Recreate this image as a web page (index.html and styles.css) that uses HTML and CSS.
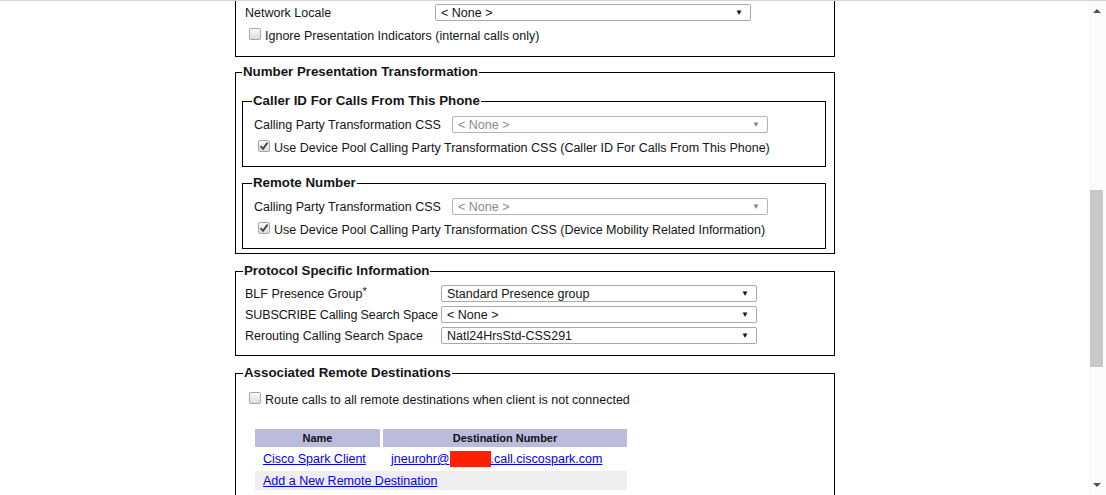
FILE: index.html
```html
<!DOCTYPE html>
<html lang="en">
<head>
  <meta charset="UTF-8" />
  <title>Phone Configuration</title>
  <link rel="stylesheet" href="styles.css">
</head>
<body>
  <div class="page">

    <!-- Device information (scrolled, top cut off) -->
    <fieldset class="box first">
      <div class="row locale-row">
        <span class="label">Network Locale</span>
        <div class="select"><span>&lt; None &gt;</span><span class="arrow">&#9660;</span></div>
      </div>
      <div class="check-row">
        <span class="cb"></span>
        <span>Ignore Presentation Indicators (internal calls only)</span>
      </div>
    </fieldset>

    <fieldset class="box group">
      <legend>Number Presentation Transformation</legend>

      <fieldset class="box inner">
        <legend>Caller ID For Calls From This Phone</legend>
        <div class="row inner-row">
          <span class="label">Calling Party Transformation CSS</span>
          <div class="select disabled"><span>&lt; None &gt;</span><span class="arrow">&#9660;</span></div>
        </div>
        <div class="check-row">
          <span class="cb checked">
            <svg width="10" height="10" viewBox="0 0 10 10"><path d="M1.5 5.2 L4 7.8 L8.6 1.6" fill="none" stroke="#444" stroke-width="1.8"/></svg>
          </span>
          <span>Use Device Pool Calling Party Transformation CSS (Caller ID For Calls From This Phone)</span>
        </div>
      </fieldset>

      <fieldset class="box inner">
        <legend>Remote Number</legend>
        <div class="row inner-row">
          <span class="label">Calling Party Transformation CSS</span>
          <div class="select disabled"><span>&lt; None &gt;</span><span class="arrow">&#9660;</span></div>
        </div>
        <div class="check-row">
          <span class="cb checked">
            <svg width="10" height="10" viewBox="0 0 10 10"><path d="M1.5 5.2 L4 7.8 L8.6 1.6" fill="none" stroke="#444" stroke-width="1.8"/></svg>
          </span>
          <span>Use Device Pool Calling Party Transformation CSS (Device Mobility Related Information)</span>
        </div>
      </fieldset>
    </fieldset>

    <fieldset class="box proto">
      <legend>Protocol Specific Information</legend>
      <div class="row proto-row">
        <span class="label">BLF Presence Group<sup>*</sup></span>
        <div class="select"><span>Standard Presence group</span><span class="arrow">&#9660;</span></div>
      </div>
      <div class="row proto-row">
        <span class="label subscribe">SUBSCRIBE Calling Search Space</span>
        <div class="select"><span>&lt; None &gt;</span><span class="arrow">&#9660;</span></div>
      </div>
      <div class="row proto-row">
        <span class="label">Rerouting Calling Search Space</span>
        <div class="select"><span>Natl24HrsStd-CSS291</span><span class="arrow">&#9660;</span></div>
      </div>
    </fieldset>

    <fieldset class="box last">
      <legend>Associated Remote Destinations</legend>
      <div class="check-row route-row">
        <span class="cb"></span>
        <span>Route calls to all remote destinations when client is not connected</span>
      </div>
      <table class="dest-table">
        <tr>
          <th class="col-name">Name</th>
          <th class="col-dest">Destination Number</th>
        </tr>
        <tr>
          <td><a href="#">Cisco Spark Client</a></td>
          <td><a href="#">jneurohr@<span class="redact"></span>.call.ciscospark.com</a></td>
        </tr>
        <tr>
          <td class="add-cell" colspan="2"><a href="#">Add a New Remote Destination</a></td>
        </tr>
      </table>
    </fieldset>
  </div>

  <!-- window scrollbar -->
  <div class="scrollbar">
    <span class="sb-arrow up"></span>
    <div class="thumb"></div>
    <span class="sb-arrow down"></span>
  </div>
</body>
</html>
```

FILE: styles.css
```css
* {
  box-sizing: border-box;
}

html, body {
  height: 100%;
}

body {
  margin: 0;
  font-family: 'Liberation Sans', Arial, sans-serif;
  font-size: 12.5px;
  color: #151515;
  background: #fff;
  border-top: 1px solid #d4d4d4;
  overflow: hidden;
  position: relative;
}

.page {
  width: 600px;
  margin-left: 235px;
  margin-top: -33px;
}

fieldset.box {
  border: 1px solid #000;
  margin: 0 0 10px;
  padding: 5px 8px 9px 7px;
  min-width: 0;
}

fieldset.box legend {
  font-weight: bold;
  font-size: 13.3px;
  padding: 0 1px;
  line-height: 14px;
}

fieldset.first {
  padding-top: 33px;
  padding-bottom: 7px;
  margin-bottom: 8px;
}

fieldset.group {
  padding: 0 8px 4px 6px;
}

fieldset.inner {
  margin: 0 0 9px 0;
  padding: 6px 8px 5px 9px;
}

.group > legend + .inner {
  margin-top: 15px;
}

fieldset.inner:last-child {
  margin-bottom: 0;
}

.row {
  display: flex;
  align-items: center;
  height: 21px;
  padding-left: 2px;
}

.label {
  flex: none;
  white-space: nowrap;
}

.label.subscribe {
  letter-spacing: -0.1px;
}

.label sup {
  font-size: 11px;
  line-height: 0;
  vertical-align: 3px;
}

.locale-row .label { width: 190px; }
.inner-row .label { width: 198px; }
.proto-row .label { width: 196px; }

.select {
  display: flex;
  align-items: center;
  justify-content: space-between;
  height: 17px;
  width: 316px;
  border: 1px solid #a9a9a9;
  border-radius: 2px;
  padding: 0 7px 0 5px;
  background: #fff;
  font-size: 12.5px;
}

.select .arrow {
  font-size: 8px;
  color: #111;
}

.select.disabled {
  color: #8a8a8a;
  border-color: #b4b4b4;
}

.select.disabled .arrow {
  color: #888;
}

.check-row {
  display: flex;
  align-items: center;
  gap: 4px;
  height: 26px;
  padding-left: 6px;
}

.cb {
  display: inline-flex;
  align-items: center;
  justify-content: center;
  flex: none;
  width: 12px;
  height: 12px;
  border: 1px solid #a6a6a6;
  border-radius: 2px;
  background: linear-gradient(#fafafa, #dcdcdc);
  margin-top: -4px;
}

.route-row {
  margin-top: 2px;
}

.dest-table {
  margin: 13px 0 0 9px;
  border-spacing: 3px;
  border-collapse: separate;
}

.dest-table th {
  background: #bbbbdd;
  font-size: 11px;
  height: 18px;
  padding: 0;
  color: #111;
}

.col-name { width: 125px; }
.col-dest { width: 244px; }

.dest-table td {
  height: 18px;
  padding: 0 0 0 8px;
}

.dest-table a {
  color: #0000ee;
}

.dest-table td.add-cell {
  background: #eeeeee;
  height: 19px;
}

.redact {
  display: inline-block;
  width: 41px;
  height: 16px;
  background: #ff2000;
  vertical-align: -4px;
}

.scrollbar {
  position: absolute;
  top: 0;
  right: 0;
  width: 17px;
  height: 100%;
  background: #fbfbfb;
}

.thumb {
  position: absolute;
  left: 1px;
  top: 189px;
  width: 13px;
  height: 177px;
  background: #c8c8c8;
}

.sb-arrow {
  position: absolute;
  left: 4px;
  width: 0;
  height: 0;
  border-left: 4px solid transparent;
  border-right: 4px solid transparent;
}

.sb-arrow.up {
  top: 8px;
  border-bottom: 4px solid #505050;
}

.sb-arrow.down {
  bottom: 8px;
  border-top: 4px solid #505050;
}
```
